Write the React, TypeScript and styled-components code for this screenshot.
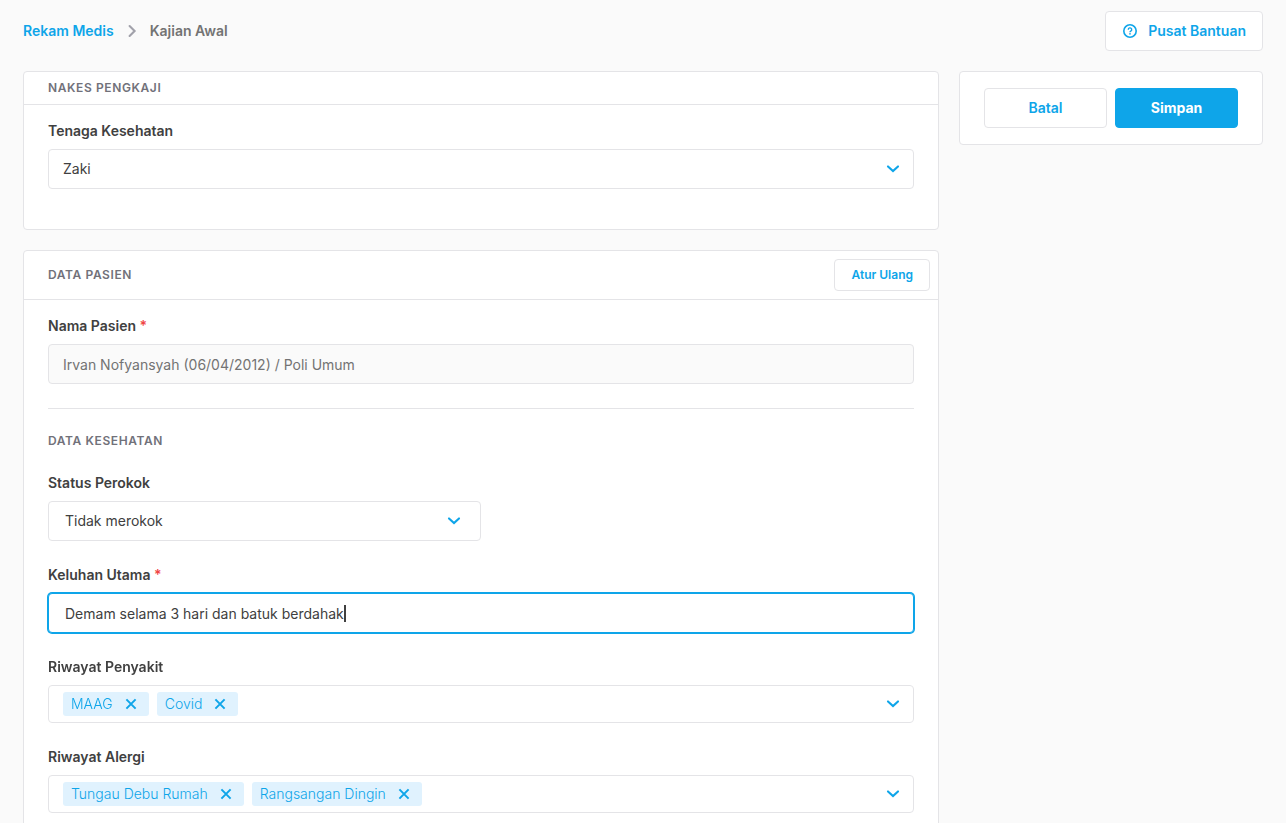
import React, { useRef, useState } from "react";
import styled, { createGlobalStyle } from "styled-components";

const color = {
  page: "#fafafa",
  surface: "#ffffff",
  border: "#e4e4e7",
  accent: "#0ea5e9",
  accentSoft: "#e0f2fe",
  text: "#404040",
  muted: "#737373",
  heading: "#71717a",
  danger: "#ef4444",
};

const GlobalStyle = createGlobalStyle`
  *, *::before, *::after { box-sizing: border-box; }
  html { scrollbar-width: none; }
  body {
    margin: 0;
    background: ${color.page};
    color: ${color.text};
    font-family: Inter, "Liberation Sans", sans-serif;
    font-size: 14px;
    line-height: 20px;
  }
  button, input, select { font: inherit; color: inherit; margin: 0; }
  svg { display: block; flex: none; }
`;

const Page = styled.div`
  padding: 11px 23px 20px;
`;

const TopBar = styled.header`
  display: flex;
  align-items: center;
  justify-content: space-between;
  margin-bottom: 20px;
`;

const Breadcrumb = styled.nav`
  display: flex;
  align-items: center;
  gap: 6px;
  font-weight: 600;
  color: ${color.muted};
`;

const CrumbLink = styled.a`
  color: ${color.accent};
  text-decoration: none;
`;

const Columns = styled.div`
  display: grid;
  grid-template-columns: minmax(0, 1fr) 304px;
  gap: 20px;
  align-items: start;
`;

const Main = styled.main`
  display: flex;
  flex-direction: column;
  gap: 20px;
`;

const Card = styled.section`
  background: ${color.surface};
  border: 1px solid ${color.border};
  border-radius: 4px;
`;

const CardHeader = styled.div`
  display: flex;
  align-items: center;
  justify-content: space-between;
  padding: 8px 8px 8px 24px;
  border-bottom: 1px solid ${color.border};
`;

const SectionTitle = styled.h2`
  margin: 0;
  font-size: 12px;
  line-height: 16px;
  font-weight: 600;
  letter-spacing: 0.05em;
  text-transform: uppercase;
  color: ${color.heading};
`;

const CardBody = styled.div<{ $bottom?: number }>`
  display: flex;
  flex-direction: column;
  gap: 24px;
  padding: 16px 24px ${(p) => p.$bottom ?? 24}px;
`;

const Field = styled.div<{ $half?: boolean }>`
  display: flex;
  flex-direction: column;
  gap: 8px;
  width: ${(p) => (p.$half ? "50%" : "100%")};
`;

const Label = styled.label`
  font-weight: 600;
`;

const Required = styled.span`
  color: ${color.danger};
`;

const Control = styled.div`
  position: relative;
  display: flex;
`;

const ReadonlyInput = styled.input`
  width: 100%;
  height: 40px;
  padding: 0 14px;
  border: 1px solid ${color.border};
  border-radius: 4px;
  background: ${color.page};
  color: ${color.muted};
`;

const InputFrame = styled.div`
  display: flex;
  align-items: center;
  height: 40px;
  padding: 0 16px;
  background: ${color.surface};
  border: 1px solid ${color.border};
  border-radius: 4px;
  cursor: text;

  &:focus-within {
    border-color: ${color.accent};
    box-shadow: 0 0 0 1px ${color.accent};
  }
`;

const GrowingInput = styled.input`
  field-sizing: content;
  min-width: 0;
  max-width: 100%;
  height: 100%;
  padding: 0;
  border: 0;
  outline: none;
  background: none;
  caret-color: transparent;
`;

const Caret = styled.span`
  display: none;
  flex: none;
  width: 2px;
  height: 17px;
  background: ${color.text};

  ${InputFrame}:focus-within & {
    display: block;
  }
`;

const Select = styled.select<{ $inset: number }>`
  appearance: none;
  width: 100%;
  height: 40px;
  padding: 0 40px 0 ${(p) => p.$inset}px;
  background: ${color.surface};
  border: 1px solid ${color.border};
  border-radius: 4px;
`;

const SelectArrow = styled.span<{ $right: number }>`
  position: absolute;
  top: 8px;
  right: ${(p) => p.$right}px;
  color: ${color.accent};
  pointer-events: none;
`;

const Divider = styled.hr`
  width: 100%;
  height: 1px;
  margin: 0;
  border: 0;
  background: ${color.border};
`;

const TagBox = styled.div`
  display: flex;
  align-items: center;
  gap: 8px;
  height: 38px;
  padding: 0 8px 0 14px;
  border: 1px solid ${color.border};
  border-radius: 4px;
`;

const Tag = styled.span`
  display: inline-flex;
  align-items: center;
  gap: 8px;
  height: 24px;
  padding: 0 8px;
  border-radius: 3px;
  background: ${color.accentSoft};
  color: ${color.accent};
  font-weight: 300;
`;

const IconButton = styled.button`
  display: flex;
  padding: 0;
  border: 0;
  background: none;
  color: ${color.accent};
  cursor: pointer;
`;

const TagToggle = styled(IconButton)`
  margin-left: auto;
`;

const Button = styled.button<{ $primary?: boolean; $small?: boolean; $grow?: boolean }>`
  display: inline-flex;
  align-items: center;
  justify-content: center;
  gap: 10px;
  flex: ${(p) => (p.$grow ? "1 1 0" : "none")};
  height: ${(p) => (p.$small ? 32 : 40)}px;
  padding: 0 16px;
  border: 1px solid ${(p) => (p.$primary ? color.accent : color.border)};
  border-radius: 4px;
  background: ${(p) => (p.$primary ? color.accent : color.surface)};
  color: ${(p) => (p.$primary ? color.surface : color.accent)};
  font-size: ${(p) => (p.$small ? 12 : 14)}px;
  font-weight: ${(p) => (p.$primary ? 700 : 600)};
  cursor: pointer;
`;

const Actions = styled.aside`
  display: flex;
  gap: 8px;
  padding: 16px 24px;
  background: ${color.surface};
  border: 1px solid ${color.border};
  border-radius: 4px;
`;

const ChevronDown = () => (
  <svg
    width="24"
    height="24"
    viewBox="0 0 24 24"
    fill="none"
    stroke="currentColor"
    strokeWidth="2.1"
    strokeLinecap="round"
    aria-hidden="true"
  >
    <path d="M7 9.4L12 14.1L17 9.4" />
  </svg>
);

const ChevronRight = () => (
  <svg
    width="24"
    height="24"
    viewBox="0 0 24 24"
    fill="none"
    stroke="#a1a1aa"
    strokeWidth="2.1"
    strokeLinecap="round"
    aria-hidden="true"
  >
    <path d="M9.6 7L14.6 12L9.6 17" />
  </svg>
);

const Cross = () => (
  <svg
    width="20"
    height="20"
    viewBox="0 0 20 20"
    fill="none"
    stroke="currentColor"
    strokeWidth="2"
    aria-hidden="true"
  >
    <path d="M5.4 5.4l9.2 9.2M14.6 5.4l-9.2 9.2" />
  </svg>
);

const QuestionCircle = () => (
  <svg width="16" height="16" viewBox="0 0 16 16" fill="none" stroke="currentColor" aria-hidden="true">
    <circle cx="8" cy="8" r="6.2" strokeWidth="1.6" />
    <path d="M6.3 6.7a1.7 1.7 0 1 1 2.5 1.4c-.6.35-.8.6-.8 1.1" strokeWidth="1.4" />
    <circle cx="8" cy="10.8" r=".85" fill="currentColor" stroke="none" />
  </svg>
);

type SelectFieldProps = {
  id: string;
  label: string;
  options: string[];
  inset: number;
  arrowRight: number;
  half?: boolean;
};

function SelectField({ id, label, options, inset, arrowRight, half }: SelectFieldProps) {
  return (
    <Field $half={half}>
      <Label htmlFor={id}>{label}</Label>
      <Control>
        <Select id={id} $inset={inset}>
          {options.map((o) => (
            <option key={o}>{o}</option>
          ))}
        </Select>
        <SelectArrow $right={arrowRight}>
          <ChevronDown />
        </SelectArrow>
      </Control>
    </Field>
  );
}

function TagField({ id, label, initial }: { id: string; label: string; initial: string[] }) {
  const [tags, setTags] = useState(initial);
  return (
    <Field>
      <Label as="span" id={id}>
        {label}
      </Label>
      <TagBox role="group" aria-labelledby={id}>
        {tags.map((tag) => (
          <Tag key={tag}>
            {tag}
            <IconButton
              type="button"
              aria-label={`Hapus ${tag}`}
              onClick={() => setTags(tags.filter((t) => t !== tag))}
            >
              <Cross />
            </IconButton>
          </Tag>
        ))}
        <TagToggle type="button" aria-label={`Pilih ${label}`}>
          <ChevronDown />
        </TagToggle>
      </TagBox>
    </Field>
  );
}

export default function App() {
  const [complaint, setComplaint] = useState("Demam selama 3 hari dan batuk berdahak");
  const complaintRef = useRef<HTMLInputElement>(null);

  return (
    <>
      <GlobalStyle />
      <Page>
        <TopBar>
          <Breadcrumb aria-label="Breadcrumb">
            <CrumbLink href="#rekam-medis">Rekam Medis</CrumbLink>
            <ChevronRight />
            <span aria-current="page">Kajian Awal</span>
          </Breadcrumb>
          <Button type="button">
            <QuestionCircle />
            Pusat Bantuan
          </Button>
        </TopBar>

        <Columns>
          <Main>
            <Card>
              <CardHeader>
                <SectionTitle>Nakes Pengkaji</SectionTitle>
              </CardHeader>
              <CardBody $bottom={40}>
                <SelectField
                  id="nakes"
                  label="Tenaga Kesehatan"
                  options={["Zaki"]}
                  inset={14}
                  arrowRight={9}
                />
              </CardBody>
            </Card>

            <Card>
              <CardHeader>
                <SectionTitle>Data Pasien</SectionTitle>
                <Button type="button" $small>
                  Atur Ulang
                </Button>
              </CardHeader>
              <CardBody>
                <Field>
                  <Label htmlFor="pasien">
                    Nama Pasien <Required>*</Required>
                  </Label>
                  <ReadonlyInput
                    id="pasien"
                    disabled
                    value="Irvan Nofyansyah (06/04/2012) / Poli Umum"
                  />
                </Field>
                <Divider />
                <SectionTitle>Data Kesehatan</SectionTitle>
                <SelectField
                  id="perokok"
                  label="Status Perokok"
                  options={["Tidak merokok", "Merokok"]}
                  inset={16}
                  arrowRight={15}
                  half
                />
                <Field>
                  <Label htmlFor="keluhan">
                    Keluhan Utama <Required>*</Required>
                  </Label>
                  <InputFrame onClick={() => complaintRef.current?.focus()}>
                    <GrowingInput
                      id="keluhan"
                      ref={complaintRef}
                      autoFocus
                      autoComplete="off"
                      value={complaint}
                      onFocus={(e) => {
                        const end = e.target.value.length;
                        e.target.setSelectionRange(end, end);
                      }}
                      onChange={(e) => setComplaint(e.target.value)}
                    />
                    <Caret />
                  </InputFrame>
                </Field>
                <TagField id="penyakit" label="Riwayat Penyakit" initial={["MAAG", "Covid"]} />
                <TagField
                  id="alergi"
                  label="Riwayat Alergi"
                  initial={["Tungau Debu Rumah", "Rangsangan Dingin"]}
                />
              </CardBody>
            </Card>
          </Main>

          <Actions>
            <Button type="button" $grow>
              Batal
            </Button>
            <Button type="submit" $primary $grow>
              Simpan
            </Button>
          </Actions>
        </Columns>
      </Page>
    </>
  );
}
